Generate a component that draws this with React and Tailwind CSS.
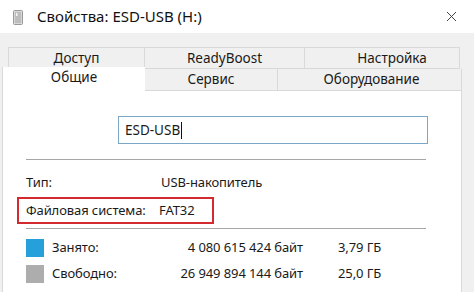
import { X } from 'lucide-react'

const font = { fontFamily: '"Noto Sans", "Open Sans", sans-serif' }

function DriveIcon() {
  return (
    <svg width="12" height="15" viewBox="0 0 12 15">
      <rect x="1.5" y="0.5" width="9" height="14" rx="1" fill="#d8d8d8" stroke="#9a9a9a" />
      <rect x="3" y="2" width="6" height="11" fill="#bdbdbd" />
      <rect x="4" y="3" width="1.5" height="3" fill="#f4f4f4" />
    </svg>
  )
}

export default function App() {
  return (
    <div
      className="w-[474px] h-[292px] overflow-hidden bg-[#f0f0f0] text-[13px] text-[#1a1a1a]"
      style={font}
    >
      {/* title bar */}
      <div className="h-[33px] bg-white flex items-center">
        <div className="ml-[12px] mt-[1px]">
          <DriveIcon />
        </div>
        <span className="ml-[13px] text-[15px] text-[#111]">Свойства: ESD-USB (H:)</span>
        <X className="ml-auto mr-[14px] text-[#333]" size={17} strokeWidth={1.3} />
      </div>

      {/* tabs */}
      <div className="mt-[14px] flex ml-[8px] h-[22px] leading-[21px] text-[13.5px]">
        <div className="w-[137px] border border-[#d9d9d9] text-center">Доступ</div>
        <div className="w-[160px] border border-l-0 border-[#d9d9d9] text-center">ReadyBoost</div>
        <div className="w-[155px] border border-l-0 border-[#d9d9d9] text-center pl-[20px]">Настройка</div>
      </div>
      <div className="flex ml-[2px] h-[22px] leading-[21px] text-[13.5px]">
        <div className="w-[143px] bg-white border-l border-[#d9d9d9] text-center -mt-[2px] pb-[2px] h-[25px] relative z-10">Общие</div>
        <div className="w-[133px] border-b border-r border-[#d9d9d9] text-center">Сервис</div>
        <div className="w-[184px] border-b border-r border-[#d9d9d9] text-center pl-[4px]">Оборудование</div>
      </div>

      {/* content panel */}
      <div className="ml-[2px] w-[460px] h-[210px] bg-white border-x border-b border-[#d9d9d9] pl-[23px] pt-[25px] tracking-[-0.1px]">
        <div className="ml-[92px] w-[310px] h-[28px] border border-[#7aa7c7] flex items-center pl-[6px] text-[13.5px] tracking-normal">
          ESD-USB<span className="w-px h-[17px] bg-[#111] ml-[1px]" />
        </div>
        <div className="mt-[15px] w-[400px] h-px bg-[#a6a6a6]" />

        <div className="mt-[14px] flex h-[18px] items-center">
          <span className="w-[135px]">Тип:</span>
          <span>USB-накопитель</span>
        </div>
        <div className="mt-[5px] -ml-[9px] w-[197px] h-[27px] border-2 border-[#d22a2f] flex items-center pl-[7px]">
          <span className="w-[133px]">Файловая система:</span>
          <span>FAT32</span>
        </div>
        <div className="mt-[4px] w-[400px] h-px bg-[#a6a6a6]" />

        <div className="mt-[10px] flex items-center h-[18px]">
          <span className="w-[18px] h-[18px] bg-[#26a0da]" />
          <span className="ml-[8px] w-[100px]">Занято:</span>
          <span className="w-[151px] text-right">4 080 615 424 байт</span>
          <span className="ml-[35px]">3,79 ГБ</span>
        </div>
        <div className="mt-[8px] flex items-center h-[18px]">
          <span className="w-[18px] h-[18px] bg-[#adadad]" />
          <span className="ml-[8px] w-[100px]">Свободно:</span>
          <span className="w-[151px] text-right">26 949 894 144 байт</span>
          <span className="ml-[35px]">25,0 ГБ</span>
        </div>
      </div>
    </div>
  )
}
